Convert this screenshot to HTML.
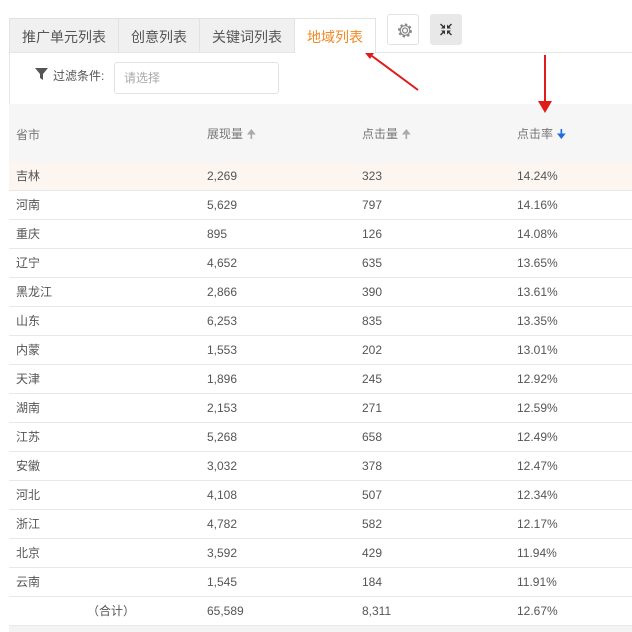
<!DOCTYPE html>
<html><head><meta charset="utf-8"><style>
body{margin:0;width:632px;height:632px;background:#fff;font-family:"Liberation Sans","Noto Sans CJK SC",sans-serif;color:#555;position:relative;overflow:hidden}
.tab{position:absolute;top:18px;height:34px;line-height:36px;font-size:14px;text-align:center;background:#f0f0f0;border:1px solid #e2e2e2;border-bottom:none;box-sizing:border-box;color:#555}
.box{position:absolute;top:14px;width:32px;height:31px;border-radius:3px;box-sizing:border-box}
.wrap{position:absolute;left:9px;top:52px;width:623px;height:52px;border:1px solid #e6e6e6;border-right:none;border-bottom:none;box-sizing:border-box}
.hdr{position:absolute;left:9px;top:104px;width:623px;height:58px;background:#f6f6f6;font-size:12px;color:#777}
.row{position:absolute;left:9px;width:623px;height:29px;border-bottom:1px solid #e8e8e8;box-sizing:border-box;font-size:12px;line-height:28px;color:#555}
.c{position:absolute}
.a{left:7px}.b{left:198px}.d{left:353px}.e{left:508px}
</style></head><body>
<div class="tab" style="left:9px;width:110px">推广单元列表</div>
<div class="tab" style="left:118px;width:82px">创意列表</div>
<div class="tab" style="left:199px;width:96px">关键词列表</div>
<div class="tab" style="left:294px;width:82px;background:#fff;color:#f08a24;height:35px;z-index:2">地域列表</div>
<div class="box" style="left:387px;border:1px solid #e2e2e2;background:#fff">
<svg width="30" height="29" viewBox="0 0 30 29"><circle cx="17" cy="15.5" r="2.5" fill="none" stroke="#888" stroke-width="1.3"/><circle cx="17" cy="15.5" r="5.8" fill="none" stroke="#888" stroke-width="2.4" stroke-dasharray="2.3 2.2"/><circle cx="17" cy="15.5" r="4.8" fill="none" stroke="#888" stroke-width="1.2"/></svg></div>
<div class="box" style="left:430px;background:#e8e8e8">
<svg width="32" height="31" viewBox="0 0 32 31"><g stroke="#333" stroke-width="1.4"><path d="M10.5 10l3 3M21.5 10l-3 3M10.5 21l3-3M21.5 21l-3-3"/></g><g fill="#333"><path d="M15 14.5h-4l4-4z"/><path d="M17 14.5h4l-4-4z"/><path d="M15 16.5h-4l4 4z"/><path d="M17 16.5h4l-4 4z"/></g></svg></div>
<div class="wrap"></div>
<svg style="position:absolute;left:35px;top:68px" width="14" height="12"><path d="M0 0h13L8 6v6L5 10V6z" fill="#555"/></svg>
<div style="position:absolute;left:53px;top:67px;font-size:12px;color:#555">过滤条件:</div>
<div style="position:absolute;left:114px;top:62px;width:165px;height:32px;border:1px solid #e2e2e2;border-radius:3px;box-sizing:border-box;font-size:12px;color:#aaa;line-height:30px;padding-left:9px">请选择</div>
<div class="hdr">
<span class="c a" style="top:22px">省市</span>
<span class="c b" style="top:21px">展现量 <span style="color:#aaa">🠉</span></span>
<span class="c d" style="top:21px">点击量 <span style="color:#aaa">🠉</span></span>
<span class="c e" style="top:21px">点击率 <span style="color:#1e6fd9">🠋</span></span>
</div>
<div class="row" style="top:162px;background:#fdf5ef"><span class="c a">吉林</span><span class="c b">2,269</span><span class="c d">323</span><span class="c e">14.24%</span></div>
<div class="row" style="top:191px"><span class="c a">河南</span><span class="c b">5,629</span><span class="c d">797</span><span class="c e">14.16%</span></div>
<div class="row" style="top:220px"><span class="c a">重庆</span><span class="c b">895</span><span class="c d">126</span><span class="c e">14.08%</span></div>
<div class="row" style="top:249px"><span class="c a">辽宁</span><span class="c b">4,652</span><span class="c d">635</span><span class="c e">13.65%</span></div>
<div class="row" style="top:278px"><span class="c a">黑龙江</span><span class="c b">2,866</span><span class="c d">390</span><span class="c e">13.61%</span></div>
<div class="row" style="top:307px"><span class="c a">山东</span><span class="c b">6,253</span><span class="c d">835</span><span class="c e">13.35%</span></div>
<div class="row" style="top:336px"><span class="c a">内蒙</span><span class="c b">1,553</span><span class="c d">202</span><span class="c e">13.01%</span></div>
<div class="row" style="top:365px"><span class="c a">天津</span><span class="c b">1,896</span><span class="c d">245</span><span class="c e">12.92%</span></div>
<div class="row" style="top:394px"><span class="c a">湖南</span><span class="c b">2,153</span><span class="c d">271</span><span class="c e">12.59%</span></div>
<div class="row" style="top:423px"><span class="c a">江苏</span><span class="c b">5,268</span><span class="c d">658</span><span class="c e">12.49%</span></div>
<div class="row" style="top:452px"><span class="c a">安徽</span><span class="c b">3,032</span><span class="c d">378</span><span class="c e">12.47%</span></div>
<div class="row" style="top:481px"><span class="c a">河北</span><span class="c b">4,108</span><span class="c d">507</span><span class="c e">12.34%</span></div>
<div class="row" style="top:510px"><span class="c a">浙江</span><span class="c b">4,782</span><span class="c d">582</span><span class="c e">12.17%</span></div>
<div class="row" style="top:539px"><span class="c a">北京</span><span class="c b">3,592</span><span class="c d">429</span><span class="c e">11.94%</span></div>
<div class="row" style="top:568px"><span class="c a">云南</span><span class="c b">1,545</span><span class="c d">184</span><span class="c e">11.91%</span></div>
<div class="row" style="top:597px"><span class="c" style="left:78px">（合计）</span><span class="c b">65,589</span><span class="c d">8,311</span><span class="c e">12.67%</span></div>
<div style="position:absolute;left:9px;top:626px;width:623px;height:6px;background:#f3f3f3"></div>
<svg style="position:absolute;left:0;top:0" width="632" height="632">
<line x1="418" y1="90" x2="372" y2="56" stroke="#e01b1b" stroke-width="2"/><path d="M361 48l15 2-6 9z" fill="#e01b1b"/>
<line x1="545" y1="55" x2="545" y2="102" stroke="#e01b1b" stroke-width="2"/><path d="M538 101h14l-7 12z" fill="#e01b1b"/>
</svg>
</body></html>
